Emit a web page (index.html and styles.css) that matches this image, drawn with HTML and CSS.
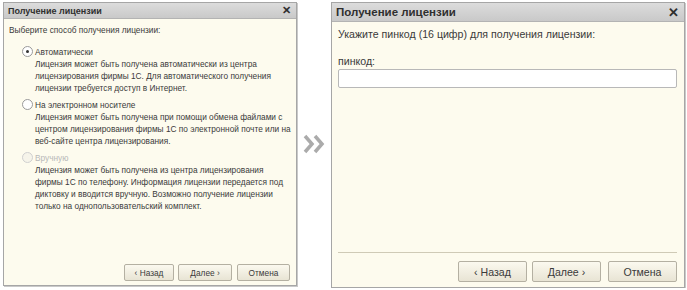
FILE: index.html
```html
<!DOCTYPE html>
<html lang="ru">
<head>
  <meta charset="UTF-8" />
  <title>Получение лицензии</title>
  <link rel="stylesheet" href="styles.css">
</head>
<body>
  <div class="page">
    <div class="dialog small">
      <div class="titlebar">
        <span>Получение лицензии</span>
        <span class="close">✕</span>
      </div>
      <div class="body">
        <p class="lead">Выберите способ получения лицензии:</p>

        <div class="option">
          <div class="radio-row"><span class="radio checked"></span>Автоматически</div>
          <p class="desc">Лицензия может быть получена автоматически из центра лицензирования фирмы 1С. Для автоматического получения лицензии требуется доступ в Интернет.</p>
        </div>

        <div class="option">
          <div class="radio-row"><span class="radio"></span>На электронном носителе</div>
          <p class="desc">Лицензия может быть получена при помощи обмена файлами с центром лицензирования фирмы 1С по электронной почте или на веб-сайте центра лицензирования.</p>
        </div>

        <div class="option">
          <div class="radio-row disabled"><span class="radio"></span>Вручную</div>
          <p class="desc">Лицензия может быть получена из центра лицензирования фирмы 1С по телефону. Информация лицензии передается под диктовку и вводится вручную. Возможно получение лицензии только на однопользовательский комплект.</p>
        </div>

        <div class="buttons">
          <button class="btn">&lsaquo; Назад</button>
          <button class="btn">Далее &rsaquo;</button>
          <button class="btn gap">Отмена</button>
        </div>
      </div>
    </div>

    <div class="arrow">
      <svg width="22" height="22" viewBox="0 0 22 22">
        <polyline points="2,3 9,11 2,19" fill="none" stroke="#ababab" stroke-width="3.5" />
        <polyline points="12,3 19,11 12,19" fill="none" stroke="#ababab" stroke-width="3.5" />
      </svg>
    </div>

    <div class="dialog large">
      <div class="titlebar">
        <span>Получение лицензии</span>
        <span class="close">✕</span>
      </div>
      <div class="body">
        <p class="lead">Укажите пинкод (16 цифр) для получения лицензии:</p>
        <label class="field-label">пинкод:</label>
        <input class="field" type="text" />
        <div class="buttons">
          <button class="btn">&lsaquo; Назад</button>
          <button class="btn">Далее &rsaquo;</button>
          <button class="btn gap">Отмена</button>
        </div>
      </div>
    </div>
  </div>
</body>
</html>
```

FILE: styles.css
```css
body {
  margin: 0;
  background: #fff;
  font-family: "Liberation Sans", Arial, sans-serif;
  color: #3a3a3a;
}

.page {
  display: flex;
  align-items: flex-start;
  padding: 2px 0 0 3px;
}

.dialog {
  display: flex;
  flex-direction: column;
  border: 1px solid #a6a6a6;
  box-shadow: 1px 1px 0 #c9c9c9;
  background: #fdfbee;
}

.titlebar {
  display: flex;
  justify-content: space-between;
  align-items: center;
  background: linear-gradient(#dcdcdc, #c9c9c9);
  border-bottom: 1px solid #b3b3b3;
  font-weight: bold;
  color: #2f2f2f;
}

.close {
  font-weight: bold;
}

.body {
  flex: 1;
  display: flex;
  flex-direction: column;
}

p {
  margin: 0;
}

.buttons {
  margin-top: auto;
  display: flex;
  justify-content: flex-end;
}

.btn {
  font-family: inherit;
  color: #3a3a3a;
  background: linear-gradient(#fbf9ef, #e8e4d4);
  border: 1px solid #b4b0a2;
  border-radius: 2px;
  padding: 0;
}

/* left dialog */
.small {
  width: 292px;
  height: 282px;
}

.small .titlebar {
  height: 15px;
  padding: 0 5px 0 4px;
  font-size: 9px;
}

.small .close {
  font-size: 11px;
}

.small .body {
  padding: 6px 6px 4px 5px;
  font-size: 8.3px;
}

.small .lead {
  margin-bottom: 10px;
}

.small .option {
  margin-bottom: 4px;
}

.radio-row {
  display: flex;
  align-items: center;
  margin-left: 13px;
  height: 13px;
}

.radio-row.disabled {
  color: #b8b8b8;
}

.radio {
  width: 9px;
  height: 9px;
  border: 1px solid #9a9a9a;
  border-radius: 50%;
  background: #fff;
  margin-right: 2px;
  position: relative;
}

.disabled .radio {
  border-color: #d0d0d0;
  background: #f6f4ea;
}

.radio.checked::after {
  content: "";
  position: absolute;
  left: 3px;
  top: 3px;
  width: 3px;
  height: 3px;
  border-radius: 50%;
  background: #333;
}

.desc {
  margin-left: 26px;
  line-height: 12px;
  width: 258px;
}

.small .btn {
  height: 17px;
  font-size: 8.3px;
  margin-left: 4px;
}

.small .btn:nth-child(1) { width: 50px; }
.small .btn:nth-child(2) { width: 54px; }
.small .btn:nth-child(3) { width: 53px; margin-left: 5px; }

/* arrow */
.arrow {
  width: 34px;
  margin-top: 131px;
  display: flex;
  justify-content: center;
}

/* right dialog */
.large {
  width: 352px;
  height: 284px;
}

.large .titlebar {
  height: 18px;
  padding: 0 5px 0 4px;
  font-size: 11.5px;
}

.large .close {
  font-size: 13px;
}

.large .body {
  padding: 6px 7px 5px 6px;
  font-size: 10.6px;
}

.large .lead {
  margin-bottom: 15px;
}

.field-label {
  display: block;
  margin-bottom: 2px;
}

.field {
  height: 19px;
  box-sizing: border-box;
  border: 1px solid #b8b8b8;
  border-radius: 2px;
  background: #fff;
  margin: 0;
}

.large .buttons {
  border-top: 1px solid #cfcab6;
  padding-top: 8px;
  margin-left: 0;
}

.large .btn {
  height: 21px;
  width: 69px;
  font-size: 10.6px;
  margin-left: 5px;
}

.large .btn.gap {
  margin-left: 7px;
}
```
